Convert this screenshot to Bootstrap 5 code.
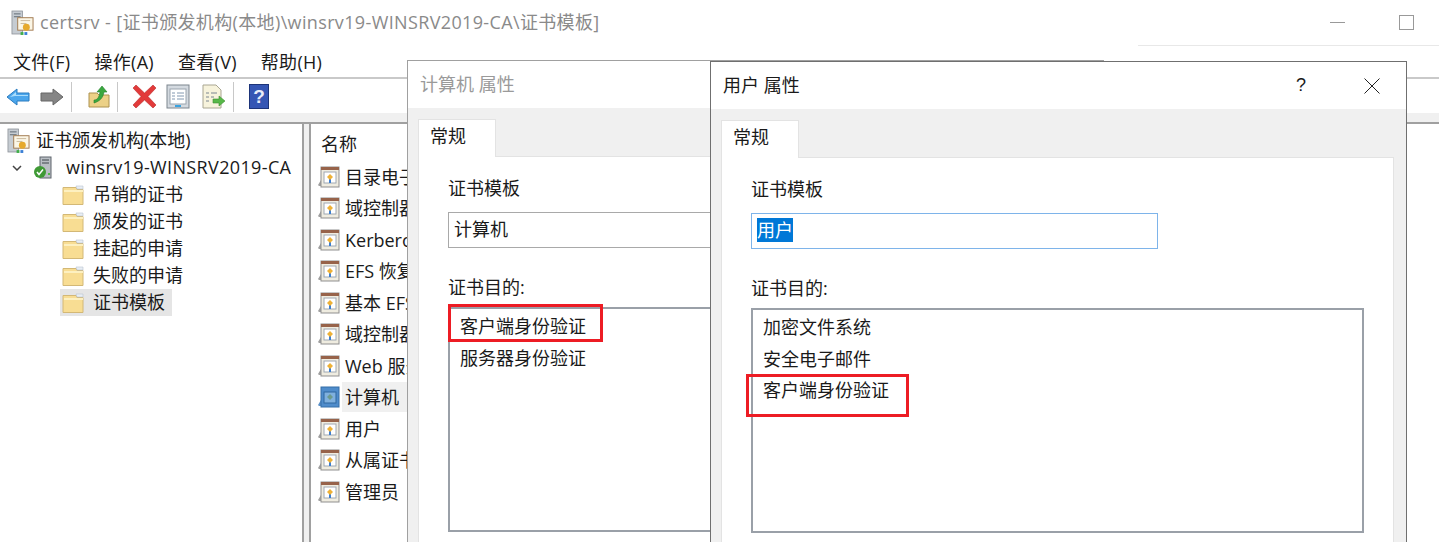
<!DOCTYPE html>
<html lang="zh-CN">
<head>
  <meta charset="UTF-8" />
  <title>certsrv</title>
  <link href="https://cdn.jsdelivr.net/npm/bootstrap@5.3.0/dist/css/bootstrap.min.css" rel="stylesheet">
  <style>
    html, body { height: 542px; overflow: hidden; }
    body {
      background: #fff;
      color: #1a1a1a;
      font-family: "Open Sans", "Noto Sans CJK SC", sans-serif;
      font-size: 18px;
      line-height: 1.2;
      position: relative;
    }
    .title-bar { height: 45px; padding-left: 11px; color: #8a8a8a; }
    .title-bar .app-title { margin-left: 6px; letter-spacing: .36px; }
    .win-min { width: 15px; height: 1px; background: #999; margin-right: 54px; }
    .win-max { width: 15px; height: 15px; border: 1px solid #999; margin-right: 25px; }
    .title-rule { height: 1px; margin-left: 1138px; background: #e8e8e8; }
    .menu-bar { height: 33px; padding: 2px 0 0 13px; gap: 24px; border-bottom: 2px solid #c9c9c9; letter-spacing: .3px; }
    .tool-bar { height: 34px; padding: 1px 0 0 6px; }
    .tool-sep { width: 1px; height: 30px; background: #c8c8c8; }
    .tool-fwd { margin: 0 7px 0 10px; }
    .tool-up { margin: 0 7px 0 16px; }
    .tool-del { margin-left: 14px; }
    .tool-props { margin-left: 9px; }
    .tool-export { margin-left: 11px; }
    .tool-sep-last { margin-left: 7px; }
    .tool-help { margin-left: 15px; }
    .tool-strip { height: 11px; background: #f0f0f0; border-bottom: 2px solid #a0a0a0; }
    .panes { height: 418px; }
    .tree-pane { width: 304px; border-right: 2px solid #a0a0a0; padding-top: 3px; }
    .pane-gap { width: 5px; background: #f0f0f0; }
    .list-pane { flex: 1; border-left: 2px solid #a0a0a0; padding: 7px 0 0 5px; white-space: nowrap; }
    .list-clip { width: 91px; overflow: hidden; }
    .tree-row { height: 27px; }
    .tree-root { padding-left: 7px; }
    .tree-root span { margin-left: 6px; }
    .tree-host { padding-left: 12px; }
    .tree-host .ca-name { margin-left: 13px; letter-spacing: .36px; }
    .tree-host .srv { margin-left: 12px; }
    .tree-leaf { padding-left: 62px; }
    .tree-leaf span { margin-left: 7px; padding: 0 2px; line-height: 27px; }
    .leaf-on { position: relative; }
    .leaf-on::before { content: ""; position: absolute; left: 60px; top: 0; width: 112px; height: 27px; background: #e5e5e5; }
    .leaf-on > * { position: relative; }
    .list-head { height: 30px; padding-left: 5px; line-height: 27px; }
    .tpl-row { height: 31.5px; padding-left: 2px; }
    .tpl-row svg { flex: none; }
    .tpl-row span { margin-left: 2px; padding: 0 3px; line-height: 30px; min-width: 0; overflow: hidden; }
    .tpl-on span { background: #f0f0f0; flex: 1; }
    .dlg {
      position: absolute;
      width: 697px;
      background: #f0f0f0;
      border: 1px solid #a0a0a0;
      border-bottom: 0;
      overflow: hidden;
    }
    .dlg-back { left: 407px; top: 60px; height: 482px; }
    .dlg-front { left: 710px; top: 61px; height: 481px; border-color: #6f6f6f; }
    .dlg-title { height: 47px; background: #fff; padding-left: 12px; }
    .dlg-back .dlg-title { color: #9a9a9a; }
    .dlg-help { margin-right: 58px; font-family: "Liberation Sans", sans-serif; }
    .dlg-close { margin-right: 26px; }
    .dlg-body { padding: 11px 12px 0 10px; }
    .dlg .nav-tabs { border-bottom: 0; }
    .dlg .nav-tabs .nav-link {
      width: 78px;
      height: 38px;
      padding: 6px 0 0 11px;
      color: #1a1a1a;
      background: #fff;
      border: 1px solid #e3e3e3;
      border-bottom: 0;
      border-radius: 0;
      margin: 0;
    }
    .tab-panel {
      height: 460px;
      background: #fff;
      border: 1px solid #e3e3e3;
      margin-top: -1px;
      padding: 19px 29px 0 29px;
    }
    .field-label { line-height: 24px; height: 24px; }
    .dlg .name-box {
      width: 407px;
      height: 36px;
      margin: 12px 0 27px;
      padding: 0 5px;
      font-size: 18px;
      color: #1a1a1a;
      border: 1px solid #a9a9a9;
      border-radius: 0;
      line-height: 33px;
      background: #fff;
    }
    .dlg-front .name-box { border-color: #7eb4ea; }
    .dlg .name-box mark { padding: 0; background: #0078d7; color: #fff; }
    .purpose-box {
      height: 225px;
      margin-top: 8px;
      padding-top: 2px;
      border: 2px solid #9aa0a8;
      border-radius: 0;
      background: #fff;
    }
    .purpose-box .list-group-item {
      border: 0;
      padding: 0 0 0 10px;
      height: 31.5px;
      line-height: 31px;
      background: transparent;
      color: #1a1a1a;
    }
    .red-box { position: absolute; border: 3px solid #ed1c24; }
    .red-back { left: 40px; top: 243px; width: 155px; height: 38px; }
    .red-front { left: 35px; top: 312px; width: 163px; height: 43px; }
  </style>
</head>
<body>
  <svg width="0" height="0" class="position-absolute">
    <defs>
      <symbol id="ico-folder" viewBox="0 0 22 22">
        <path d="M1 3.500h13l1 2h6v15H1z" fill="#f8dd93" stroke="#d3b876"/>
        <path d="M2 6h19v2H2z" fill="#fdf0c0"/>
        <path d="M14 2h7v3h-6z" fill="#e9eef4" stroke="#b9c4d0" stroke-width=".6"/>
      </symbol>
      <symbol id="ico-tpl" viewBox="0 0 22 22">
        <path d="M0 19l3-5h2v6H1z" fill="#a0a0a0"/>
        <rect x="3" y="1" width="18" height="20" fill="#efece0" stroke="#8f8f8f"/>
        <rect x="3" y="1" width="18" height="3" fill="#97634a"/>
        <rect x="6" y="6" width="12" height="11" fill="#fff" stroke="#9fa8b2"/>
        <path d="M11 12h2v5h-2z" fill="#3d7fd0"/>
        <path d="M9 11l3-3 3 3-3 3z" fill="#eeb136"/>
      </symbol>
      <symbol id="ico-tpl-on" viewBox="0 0 22 22">
        <path d="M0 19l3-5h2v6H1z" fill="#5b91c9"/>
        <rect x="3" y="1" width="18" height="20" fill="#4f8ccb" stroke="#356ea8"/>
        <rect x="6" y="6" width="12" height="11" fill="#7fb0de" stroke="#2f679f"/>
        <path d="M9 11l3-3 3 3-3 3z" fill="#6d9a8c"/>
      </symbol>
      <symbol id="ico-ca" viewBox="0 0 24 26">
        <rect x="1" y="1" width="11" height="24" fill="#c6ccd2" stroke="#8a9097" stroke-width=".8"/>
        <path d="M3 4h7M3 7h7" stroke="#5d6670"/>
        <rect x="7" y="8" width="16" height="13" fill="#fbf6e6" stroke="#a2794f"/>
        <path d="M10 11h10M10 14h6" stroke="#c9b79a"/>
        <circle cx="16" cy="18" r="3.600" fill="#e6a92c"/>
        <rect x="10" y="23" width="3" height="3" fill="#3fae49"/>
        <rect x="14" y="23" width="3" height="3" fill="#3a7fd5"/>
      </symbol>
    </defs>
  </svg>

  <div class="title-bar d-flex align-items-center">
    <svg width="23" height="25" viewBox="0 0 24 26"><use href="#ico-ca"/></svg>
    <span class="app-title">certsrv - [证书颁发机构(本地)\winsrv19-WINSRV2019-CA\证书模板]</span>
    <div class="win-min ms-auto"></div>
    <div class="win-max"></div>
  </div>
  <div class="title-rule"></div>

  <div class="menu-bar d-flex align-items-center">
    <span>文件(F)</span><span>操作(A)</span><span>查看(V)</span><span>帮助(H)</span>
  </div>

  <div class="tool-bar d-flex align-items-center">
    <svg width="24" height="20" viewBox="0 0 24 20"><path d="M1 10 11 2v4h12v8H11v4z" fill="#4ba6ec" stroke="#2b7cc0"/><path d="M4 10 10 5v3h12v1H9z" fill="#a9dcfb"/></svg>
    <svg class="tool-fwd" width="24" height="20" viewBox="0 0 24 20"><path d="M23 10 13 2v4H1v8h12v4z" fill="#858585" stroke="#666"/></svg>
    <div class="tool-sep"></div>
    <svg class="tool-up" width="22" height="24" viewBox="0 0 22 24"><path d="M1 8h8l2 2h10v12H1z" fill="#ecd187" stroke="#ad9250"/><path d="M6 15c3 0 5-2 6-8H9l5-6 5 6h-3c-1 6-4 9-10 11z" fill="#3aa83f" stroke="#25802b" stroke-width=".6"/></svg>
    <div class="tool-sep"></div>
    <svg class="tool-del" width="25" height="25" viewBox="0 0 25 25"><path d="M4 1 12.500 9 21 1l3 3-8 8.500 8 8.500-3 3-8.500-8-8.500 8-3-3 8-8.500-8-8.500z" fill="#e23a3a" stroke="#b92a2a" stroke-width=".6"/></svg>
    <svg class="tool-props" width="24" height="25" viewBox="0 0 24 25"><rect x="1" y="1" width="22" height="23" fill="#d4dae0" stroke="#7d858e"/><rect x="4" y="5" width="16" height="15" fill="#fff" stroke="#9aa4ae"/><path d="M6 9h3M11 9h7M6 12h3M11 12h7M6 15h3M11 15h7" stroke="#8298b0"/><rect x="9" y="21" width="6" height="2" fill="#3aa3e0"/></svg>
    <svg class="tool-export" width="25" height="25" viewBox="0 0 25 25"><path d="M2 1h13l5 5v18H2z" fill="#f7f3dc" stroke="#a9a692"/><path d="M5 9h3M10 9h6M5 13h3M10 13h3M5 17h3" stroke="#7a8590"/><path d="M12 15h6v-3l6 5-6 5v-3h-6z" fill="#57b848" stroke="#3e8f33" stroke-width=".6"/></svg>
    <div class="tool-sep tool-sep-last"></div>
    <svg class="tool-help" width="20" height="25" viewBox="0 0 20 25"><rect x="0.500" y="0.500" width="19" height="24" fill="#3556b4" stroke="#1d3479"/><text x="10" y="19" text-anchor="middle" font-family="Liberation Sans, sans-serif" font-size="19" font-weight="700" fill="#e8ecf8">?</text></svg>
  </div>
  <div class="tool-strip"></div>

  <div class="panes d-flex">
    <div class="tree-pane">
      <div class="tree-row tree-root d-flex align-items-center">
        <svg width="23" height="25" viewBox="0 0 24 26"><use href="#ico-ca"/></svg><span>证书颁发机构(本地)</span>
      </div>
      <div class="tree-row tree-host d-flex align-items-center">
        <svg width="10" height="6" viewBox="0 0 10 6"><path d="M1 1l4 4 4-4" fill="none" stroke="#444" stroke-width="1.500"/></svg>
        <svg class="srv" width="19" height="23" viewBox="0 0 19 23"><rect x="6" y="1" width="11" height="21" fill="#b9bec4" stroke="#5e656c"/><path d="M8 4h7M8 7h7" stroke="#3f464d"/><rect x="14" y="17" width="2" height="2" fill="#52b848"/><circle cx="6" cy="16" r="6" fill="#3f9a35"/><path d="M3 16l2 2.500 4-5" fill="none" stroke="#fff" stroke-width="1.500"/></svg>
        <span class="ca-name">winsrv19-WINSRV2019-CA</span>
      </div>
      <div class="tree-row tree-leaf d-flex align-items-center"><svg width="22" height="22"><use href="#ico-folder"/></svg><span>吊销的证书</span></div>
      <div class="tree-row tree-leaf d-flex align-items-center"><svg width="22" height="22"><use href="#ico-folder"/></svg><span>颁发的证书</span></div>
      <div class="tree-row tree-leaf d-flex align-items-center"><svg width="22" height="22"><use href="#ico-folder"/></svg><span>挂起的申请</span></div>
      <div class="tree-row tree-leaf d-flex align-items-center"><svg width="22" height="22"><use href="#ico-folder"/></svg><span>失败的申请</span></div>
      <div class="tree-row tree-leaf leaf-on d-flex align-items-center"><svg width="22" height="22"><use href="#ico-folder"/></svg><span>证书模板</span></div>
    </div>
    <div class="pane-gap"></div>
    <div class="list-pane">
      <div class="list-clip">
        <div class="list-head">名称</div>
        <div class="tpl-row d-flex align-items-center"><svg width="22" height="22"><use href="#ico-tpl"/></svg><span>目录电子邮件复制</span></div>
        <div class="tpl-row d-flex align-items-center"><svg width="22" height="22"><use href="#ico-tpl"/></svg><span>域控制器身份验证</span></div>
        <div class="tpl-row d-flex align-items-center"><svg width="22" height="22"><use href="#ico-tpl"/></svg><span>Kerberos 身份验证</span></div>
        <div class="tpl-row d-flex align-items-center"><svg width="22" height="22"><use href="#ico-tpl"/></svg><span>EFS 恢复代理</span></div>
        <div class="tpl-row d-flex align-items-center"><svg width="22" height="22"><use href="#ico-tpl"/></svg><span>基本 EFS</span></div>
        <div class="tpl-row d-flex align-items-center"><svg width="22" height="22"><use href="#ico-tpl"/></svg><span>域控制器</span></div>
        <div class="tpl-row d-flex align-items-center"><svg width="22" height="22"><use href="#ico-tpl"/></svg><span>Web 服务器</span></div>
        <div class="tpl-row tpl-on d-flex align-items-center"><svg width="22" height="22"><use href="#ico-tpl-on"/></svg><span>计算机</span></div>
        <div class="tpl-row d-flex align-items-center"><svg width="22" height="22"><use href="#ico-tpl"/></svg><span>用户</span></div>
        <div class="tpl-row d-flex align-items-center"><svg width="22" height="22"><use href="#ico-tpl"/></svg><span>从属证书颁发机构</span></div>
        <div class="tpl-row d-flex align-items-center"><svg width="22" height="22"><use href="#ico-tpl"/></svg><span>管理员</span></div>
      </div>
    </div>
  </div>

  <!-- back dialog -->
  <div class="dlg dlg-back">
    <div class="dlg-title d-flex align-items-center">计算机 属性</div>
    <div class="dlg-body">
      <ul class="nav nav-tabs"><li class="nav-item"><a class="nav-link active">常规</a></li></ul>
      <div class="tab-panel">
        <div class="field-label">证书模板</div>
        <div class="form-control name-box">计算机</div>
        <div class="field-label">证书目的:</div>
        <ul class="list-group purpose-box">
          <li class="list-group-item">客户端身份验证</li>
          <li class="list-group-item">服务器身份验证</li>
        </ul>
      </div>
    </div>
    <div class="red-box red-back"></div>
  </div>

  <!-- front dialog -->
  <div class="dlg dlg-front">
    <div class="dlg-title d-flex align-items-center">
      <span>用户 属性</span>
      <span class="dlg-help ms-auto">?</span>
      <svg class="dlg-close" width="16" height="16" viewBox="0 0 16 16"><path d="M.5.5l15 15M15.500.5l-15 15" stroke="#222" fill="none"/></svg>
    </div>
    <div class="dlg-body">
      <ul class="nav nav-tabs"><li class="nav-item"><a class="nav-link active">常规</a></li></ul>
      <div class="tab-panel">
        <div class="field-label">证书模板</div>
        <div class="form-control name-box"><mark>用户</mark></div>
        <div class="field-label">证书目的:</div>
        <ul class="list-group purpose-box">
          <li class="list-group-item">加密文件系统</li>
          <li class="list-group-item">安全电子邮件</li>
          <li class="list-group-item">客户端身份验证</li>
        </ul>
      </div>
    </div>
    <div class="red-box red-front"></div>
  </div>

  <script src="https://cdn.jsdelivr.net/npm/bootstrap@5.3.0/dist/js/bootstrap.bundle.min.js"></script>
</body>
</html>
